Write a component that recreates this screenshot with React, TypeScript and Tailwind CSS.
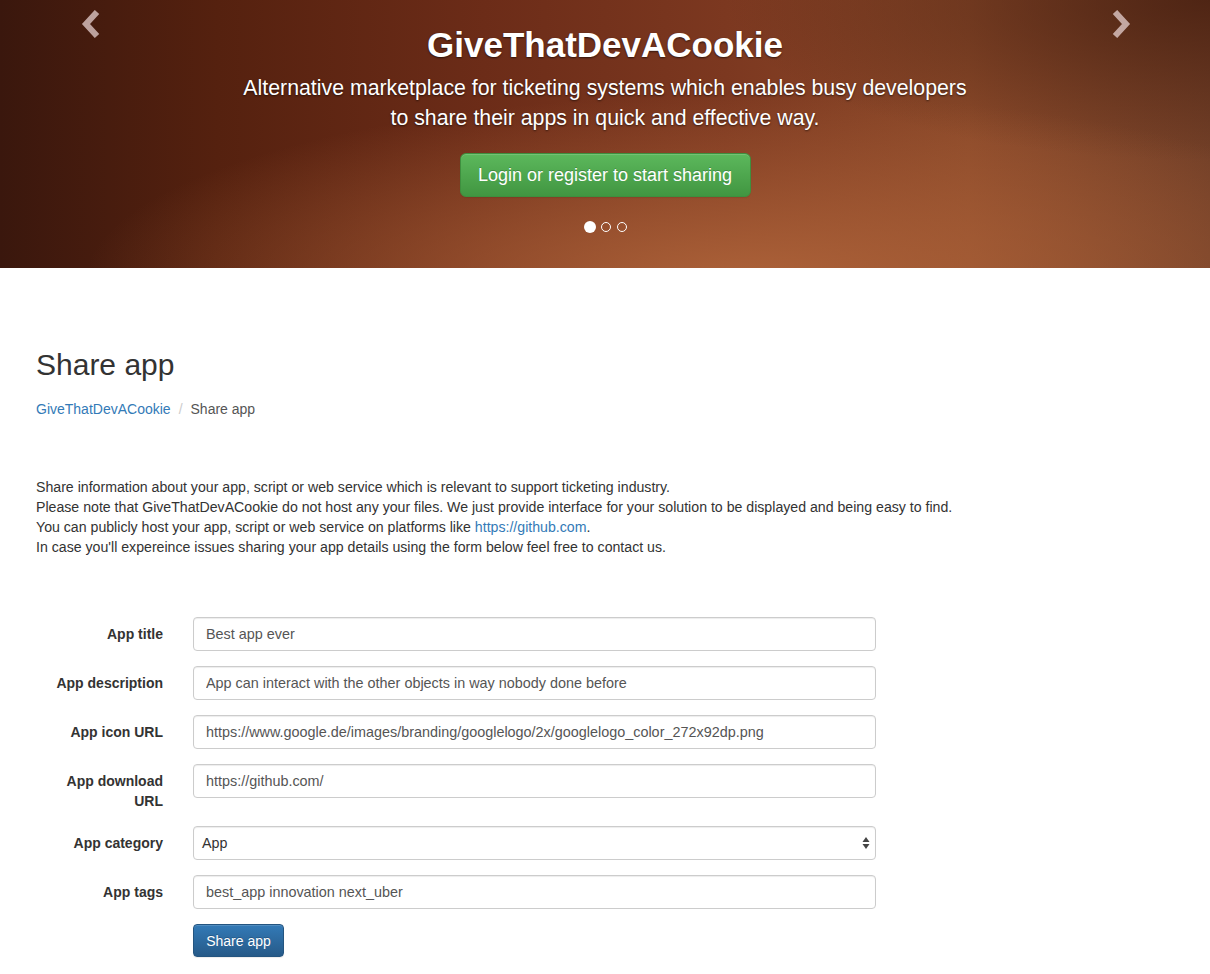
import React from "react";

function Chevron({ dir }: { dir: "left" | "right" }) {
  return (
    <svg width="20" height="28" viewBox="0 0 20 28" className="block">
      {dir === "left" ? (
        <path d="M16 2 L5 14 L16 26" fill="none" stroke="rgba(235,215,215,0.72)" strokeWidth="6" strokeLinejoin="miter" />
      ) : (
        <path d="M4 2 L15 14 L4 26" fill="none" stroke="rgba(235,215,215,0.72)" strokeWidth="6" strokeLinejoin="miter" />
      )}
    </svg>
  );
}

function Field({ label, value }: { label: React.ReactNode; value: string }) {
  return (
    <div className="flex items-start mb-[15px]">
      <div className="w-[127px] shrink-0 text-right font-bold text-[14px] leading-[20px] text-[#333] pt-[7px]">
        {label}
      </div>
      <div className="ml-[30px] w-[683px]">
        <input
          readOnly
          defaultValue={value}
          className="block w-full h-[34px] px-[12px] py-[6px] text-[14.4px] leading-[20px] text-[#555] bg-white border border-[#ccc] rounded-[4px] shadow-[inset_0_1px_1px_rgba(0,0,0,0.075)] outline-none font-['Liberation_Sans',Arial,sans-serif]"
        />
      </div>
    </div>
  );
}

export default function App() {
  return (
    <div className="min-h-[974px] bg-white font-['Liberation_Sans',Arial,sans-serif] text-[#333] text-[14px] leading-[20px]">
      {/* Hero carousel */}
      <div className="relative h-[268px] overflow-hidden bg-[radial-gradient(ellipse_55%_70%_at_62%_105%,rgba(175,100,58,0.95),rgba(175,100,58,0)_100%),radial-gradient(ellipse_40%_60%_at_100%_0%,rgba(70,30,15,0.8),rgba(70,30,15,0)_100%),linear-gradient(to_right,#3a170d_0%,#55210f_18%,#6c2c18_40%,#7c3820_60%,#8c4a2a_80%,#734028_100%)]">
        <div className="absolute left-[81px] top-[10px]">
          <Chevron dir="left" />
        </div>
        <div className="absolute left-[1111px] top-[10px]">
          <Chevron dir="right" />
        </div>
        <div className="flex flex-col items-center pt-[25px] text-white [text-shadow:0_1px_2px_rgba(0,0,0,0.6)]">
          <h1 className="text-[35px] leading-[40px] font-bold">GiveThatDevACookie</h1>
          <p className="mt-[8px] text-[21.3px] leading-[30px] text-center">
            Alternative marketplace for ticketing systems which enables busy developers
            <br />
            to share their apps in quick and effective way.
          </p>
          <button className="mt-[20px] h-[44px] w-[291px] rounded-[6px] border border-[#3e8f3e] bg-[linear-gradient(to_bottom,#5cb85c_0%,#419641_100%)] text-[18px] leading-[24px] text-white [text-shadow:0_-1px_0_rgba(0,0,0,0.2)] shadow-[inset_0_1px_0_rgba(255,255,255,0.15),0_1px_1px_rgba(0,0,0,0.075)]">
            Login or register to start sharing
          </button>
          <div className="mt-[24px] flex items-center gap-[4px]">
            <span className="block w-[12px] h-[12px] rounded-full bg-white" />
            <span className="block w-[10px] h-[10px] rounded-full border border-white ml-[1px]" />
            <span className="block w-[10px] h-[10px] rounded-full border border-white ml-[2px]" />
          </div>
        </div>
      </div>

      {/* Content */}
      <div className="pl-[36px] pr-[35px]">
        <h1 className="mt-[80px] text-[30px] leading-[33px] font-normal text-[#333]">Share app</h1>
        <div className="mt-[18px] flex items-center text-[14px] leading-[20px]">
          <a className="text-[#337ab7]">GiveThatDevACookie</a>
          <span className="px-[8px] text-[#ccc]">/</span>
          <span className="text-[#555]">Share app</span>
        </div>

        <p className="mt-[58px] text-[14.15px] leading-[20px] text-[#333]">
          Share information about your app, script or web service which is relevant to support ticketing industry.
          <br />
          Please note that GiveThatDevACookie do not host any your files. We just provide interface for your solution to be displayed and being easy to find.
          <br />
          You can publicly host your app, script or web service on platforms like{" "}
          <a className="text-[#337ab7]">https://github.com</a>.
          <br />
          In case you'll expereince issues sharing your app details using the form below feel free to contact us.
        </p>

        <form className="mt-[60px]">
          <Field label="App title" value="Best app ever" />
          <Field label="App description" value="App can interact with the other objects in way nobody done before" />
          <Field
            label="App icon URL"
            value="https://www.google.de/images/branding/googlelogo/2x/googlelogo_color_272x92dp.png"
          />
          <Field
            label={
              <>
                App download
                <br />
                URL
              </>
            }
            value="https://github.com/"
          />
          <div className="flex items-start mb-[15px]">
            <div className="w-[127px] shrink-0 text-right font-bold text-[14px] leading-[20px] text-[#333] pt-[7px]">
              App category
            </div>
            <div className="ml-[30px] w-[683px] h-[34px] flex items-center justify-between pl-[8px] pr-[5px] border border-[#ccc] rounded-[4px] bg-white shadow-[inset_0_1px_1px_rgba(0,0,0,0.075)]">
              <span className="text-[14.3px] text-[#333]">App</span>
              <svg width="8" height="14" viewBox="0 0 8 14">
                <path d="M4 1 L7.5 6 L0.5 6 Z" fill="#444" />
                <path d="M4 13 L7.5 8 L0.5 8 Z" fill="#444" />
              </svg>
            </div>
          </div>
          <Field label="App tags" value="best_app innovation next_uber" />
          <div className="ml-[157px]">
            <button
              type="button"
              className="h-[33px] w-[91px] rounded-[4px] border border-[#245580] bg-[linear-gradient(to_bottom,#337ab7_0%,#265a88_100%)] text-white text-[14px] leading-[20px] [text-shadow:0_-1px_0_rgba(0,0,0,0.2)] shadow-[inset_0_1px_0_rgba(255,255,255,0.15),0_1px_1px_rgba(0,0,0,0.075)]"
            >
              Share app
            </button>
          </div>
        </form>
      </div>
    </div>
  );
}
